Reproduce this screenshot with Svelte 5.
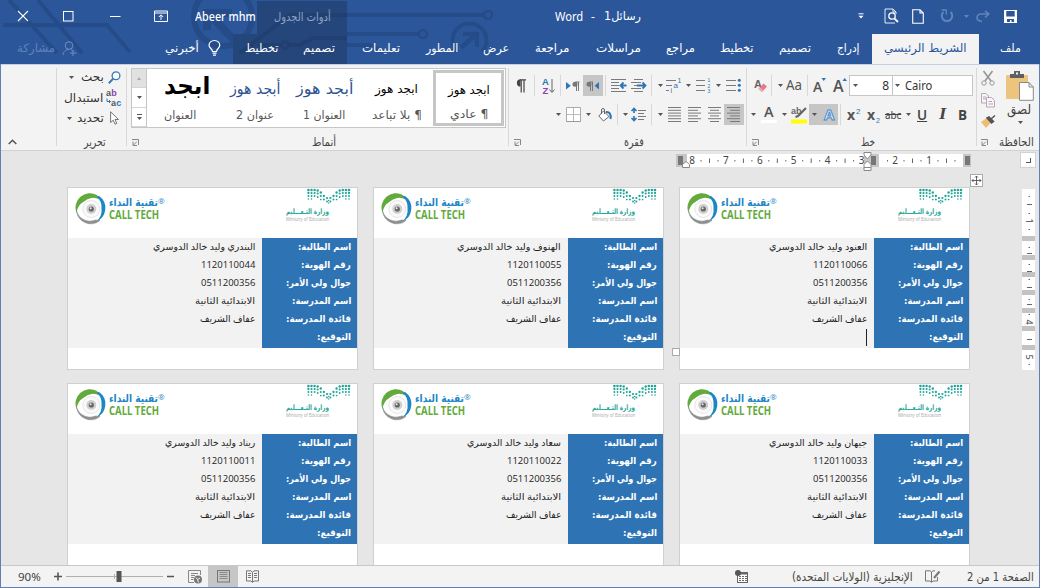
<script>
  function fit(node, w) {
    const apply = (width) => {
      node.style.transform = 'none';
      const n = node.offsetWidth;
      if (n && width) node.style.transform = `scaleX(${width / n})`;
    };
    apply(w);
    return { update: apply };
  }

  const lines = (rows, c = '#7a7a7a') =>
    rows.map(([x1, x2, y]) => `<path d="M${x1} ${y}H${x2}" stroke="${c}"/>`).join('');

  const icons = {
    close: [12, 12, '<path d="M1 1L11 11M11 1L1 11" stroke="#fff" stroke-width="1.1"/>'],
    max: [11, 11, '<rect x=".5" y=".5" width="9.5" height="9.5" stroke="#fff" fill="none"/>'],
    min: [11, 3, '<path d="M0 1.5H10.500" stroke="#fff"/>'],
    ribbonopt: [14, 12, '<path d="M.5 1H13.500V11.500H.5ZM.5 3H13.500M7 10V5M4.800 7L7 4.800L9.200 7" stroke="#fff" fill="none"/>'],
    custom: [6, 6, '<path d="M.5 .8H5.500" stroke="#fff"/><path d="M.5 2.800H5.500L3 5.500Z" fill="#fff"/>'],
    preview: [15, 16, '<path d="M9 1H1V15H11M9 1L12 4V6M9 1V4H12" stroke="#e4ebf5" fill="none"/><circle cx="8" cy="8" r="3.200" stroke="#fff" stroke-width="1.300" fill="#2b579a"/><path d="M10.300 10.300L14 14" stroke="#fff" stroke-width="1.800"/>'],
    newdoc: [12, 15, '<path d="M.7 .7H8L11.300 4V14.300H.7ZM8 .7V4H11.300" stroke="#fff" stroke-width="1.100" fill="none"/>'],
    redo: [14, 14, '<path d="M3.500 3A5.200 5.200 0 1 0 10.500 3" stroke="#6184bb" stroke-width="2" fill="none"/><path d="M6 1H10.800V5.500" transform="translate(-4.500 0)" stroke="#6184bb" stroke-width="1.300" fill="none"/>'],
    undo: [14, 13, '<path d="M6 11.500C-1 11 0 4 5 4H12M9 .8L12.800 4L9 7.500" stroke="#6184bb" stroke-width="1.600" fill="none"/>'],
    dcaret: [5, 3, '<path d="M0 0H5L2.500 3Z" fill="#6184bb"/>'],
    save: [13, 13, '<path d="M0 0H13V13H0Z" fill="#fff"/><path d="M2.300 1H10.700V6.500H2.300ZM3 9H10V12H7.500V10H6V12H3Z" fill="#2b579a"/>'],
    share: [15, 15, '<circle cx="7" cy="4.500" r="3.800" stroke="#6f8fc2" fill="none"/><path d="M1 14C1.500 10 4 8.500 7 8.500M9 8.500C10 9 11 9.500 11.500 10M11 9V15M8 12H14.500" stroke="#6f8fc2" fill="none"/>'],
    bulb: [13, 16, '<path d="M4.500 11.500C4.500 9 1 8 1 5.300A5.300 4.700 0 0 1 11.800 5.300C11.800 8 8.500 9 8.500 11.500ZM4.500 13.200H8.500M5 15.200H8" stroke="#fff" stroke-width="1.200" fill="none"/>'],
    caret: [5, 3, '<path d="M0 0H5L2.500 3Z" fill="#555"/>'],
    launch: [7, 7, '<path d="M0 .5H6.500V6" stroke="#888" fill="none"/><path d="M1 2.500V6.500H5M4.800 2.700L1.500 6" stroke="#888" fill="none"/>'],
    chev: [9, 6, '<path d="M.7 5L4.500 1.200L8.300 5" stroke="#555" stroke-width="1.500" fill="none"/>'],
    find: [13, 13, '<circle cx="8" cy="4.800" r="3.900" stroke="#3a78b9" stroke-width="1.300" fill="#fafdff"/><path d="M5.200 7.600L.8 12.200" stroke="#3a78b9" stroke-width="2"/>'],
    cursor: [9, 14, '<path d="M.6 .8V11.500L3.200 9.200L5 13.200L6.800 12.400L5 8.500H8.500Z" fill="#fff" stroke="#666" stroke-width=".9"/>'],
    pil: [12, 14, '<path d="M5 .8H11M6.200 1V13.500M9 1V13.500" stroke="#444" stroke-width="1.200" fill="none"/><path d="M5.500 .3V7.500A3.600 3.600 0 0 1 5.500 .3" fill="#444"/>'],
    ltr: [14, 10, '<path d="M0 1L4.800 4.700L0 8.500Z" fill="#2f75b5"/><path d="M9.500 1H13.500M10.500 1V10M12.500 1V10" stroke="#777"/><circle cx="9" cy="3.300" r="2.500" fill="#777"/>'],
    rtl: [14, 10, '<path d="M13 1L8.600 4.700L13 8.500Z" fill="#2f75b5"/><path d="M3.500 1H7M4.500 1V10M6.500 1V10" stroke="#777"/><circle cx="3" cy="3.300" r="2.500" fill="#777"/>'],
    outdent: [16, 14, lines([[0, 15, .5], [0, 8, 3.5], [0, 8, 6.5], [0, 8, 9.5], [0, 15, 12.5]]) + '<path d="M15.500 6.500H10M12.500 3.500L9.500 6.500L12.500 9.500" stroke="#2f75b5" stroke-width="1.800" fill="none"/>'],
    indent: [16, 14, lines([[3, 12, .5], [0, 10, 3.5], [3, 8, 6.5], [0, 10, 9.5], [3, 12, 12.5]]) + '<path d="M6 6.500H14M11.500 3.500L14.500 6.500L11.500 9.500" stroke="#2f75b5" stroke-width="1.800" fill="none"/>'],
    multi: [15, 15, lines([[0, 10, 2.5], [0, 6, 7.5], [0, 3, 12.5]]) + '<g fill="#2f75b5" font-family="Liberation Sans" font-size="7"><text x="11.500" y="5">1</text><text x="7.500" y="10" font-size="8">a</text><text x="4.500" y="15">i</text></g>'],
    number: [15, 15, lines([[0, 9, 2.5], [0, 9, 7.5], [0, 9, 12.5]]) + '<g fill="#2f75b5" font-family="Liberation Sans" font-size="5"><text x="11.500" y="4.300">1</text><text x="11.500" y="9.500">2</text><text x="11.500" y="14.700">3</text></g>'],
    bullet: [15, 15, lines([[0, 10, 2.5], [0, 10, 7.5], [0, 10, 12.5]]) + '<g fill="#2f75b5"><circle cx="13.300" cy="2.300" r="1.500"/><circle cx="13.300" cy="7.300" r="1.500"/><circle cx="13.300" cy="12.300" r="1.500"/></g>'],
    borders: [15, 15, '<path d="M.5 .5H14.500V14.500H.5Z" stroke="#aaa" fill="#fff"/><path d="M7.500 1V14M1 7.500H14" stroke="#bbb"/><path d="M.5 14.500H14.500" stroke="#999"/>'],
    bucket: [14, 14, '<path d="M5.500 3L11 8.500L5.500 13L.8 8Z" stroke="#666" fill="#fff"/><path d="M3.500 6V2A1.500 1.500 0 0 1 6.500 2V6" stroke="#666" fill="none"/><path d="M8 4C11 3.500 13.500 6 12.500 11" stroke="#2f75b5" stroke-width="2" fill="none"/>'],
    spacing: [15, 15, lines([[7, 15, 3.5], [7, 13, 6.5], [7, 15, 9.5], [7, 13, 12.5]]) + '<path d="M3 1.500V6M3 9V13.500M.5 4L3 1.500L5.500 4M.5 11L3 13.500L5.500 11" stroke="#2f75b5" stroke-width="1.600" fill="none"/>'],
    just: [14, 15, lines([0, 1, 2, 3, 4, 5].map((i) => [0, 13, i * 2.8 + .5]))],
    left: [14, 15, lines([0, 1, 2, 3, 4, 5].map((i) => [0, i % 2 ? 10 : 13, i * 2.8 + .5]))],
    center: [14, 15, lines([0, 1, 2, 3, 4, 5].map((i) => [i % 2 ? 2 : 0, i % 2 ? 11 : 13, i * 2.8 + .5]))],
    right: [14, 15, lines([0, 1, 2, 3, 4, 5].map((i) => [i % 2 ? 3 : 0, 13, i * 2.8 + .5]))],
    az: [13, 18, '<g font-family="Liberation Sans" font-weight="bold" font-size="9.500"><text x="0" y="8" fill="#2f75b5">A</text><text x=".5" y="17" fill="#8848a8">Z</text></g><path d="M10 2V15M7.500 12.500L10 15.500L12.500 12.500" stroke="#666" fill="none"/>'],
    eraser: [14, 15, '<text x="0" y="10" font-family="Liberation Sans" font-size="11" font-weight="bold" fill="#666">A</text><path d="M4.500 11L9.500 5.500L13 8.500L8 14Z" fill="#e8788a"/><path d="M4.500 11L6 9.500L9.500 12.500L8 14Z" fill="#f3a9b3"/>'],
    shrink: [14, 16, '<text x="0" y="13.500" font-family="Open Sans" font-size="14" font-weight="600" fill="#555">A</text><path d="M8.500 0H13L10.700 3Z" fill="#2f75b5"/>'],
    grow: [15, 16, '<text x="0" y="13.500" font-family="Open Sans" font-size="16" font-weight="600" fill="#555">A</text><path d="M9.500 3H14L11.700 0Z" fill="#2f75b5"/>'],
    fcolor: [16, 18, '<text x="3" y="10.500" font-family="Open Sans" font-size="14.500" font-weight="600" fill="#555">A</text><rect x="0" y="14" width="16" height="3" fill="#fff"/>'],
    hilite: [16, 18, '<text x="0" y="8" font-family="Liberation Sans" font-size="9" font-weight="bold" fill="#666">ab</text><path d="M15 2L7 10L4.500 11" stroke="#666" stroke-width="2.200" fill="none"/><rect x="0" y="13.500" width="16" height="4" fill="#ff0"/>'],
    effects: [13, 15, '<text x="1" y="13" font-family="Open Sans" font-size="15" font-weight="bold" fill="#e7f1fb" stroke="#4a8ccc">A</text>'],
    sup: [15, 16, '<text x="0" y="13" font-family="Open Sans" font-size="14" font-weight="bold" fill="#555">x</text><text x="9" y="6.500" font-family="Liberation Sans" font-size="8" fill="#2f75b5">2</text>'],
    sub: [15, 16, '<text x="0" y="13" font-family="Open Sans" font-size="14" font-weight="bold" fill="#555">x</text><text x="9" y="16" font-family="Liberation Sans" font-size="7" fill="#2f75b5">2</text>'],
    cut: [14, 15, '<path d="M2.500 0L10 10M11.500 0L4 10" stroke="#999" stroke-width="1.700"/><circle cx="3" cy="12" r="2.200" fill="none" stroke="#999"/><circle cx="11" cy="12" r="2.200" fill="none" stroke="#999"/>'],
    copy: [14, 15, '<path d="M.5 .5H5L7.500 3V10H.5Z" fill="#f8f4f8" stroke="#b5a9b5"/><path d="M5.500 4.500H10.500L13.500 7.500V14H5.500Z" fill="#f8f4f8" stroke="#b5a9b5"/><path d="M2 4H5M2 6H5M7.500 8.500H11M7.500 11H12" stroke="#b5a9b5"/>'],
    brush: [15, 13, '<path d="M0 7L7 2L9.500 8L5 13Z" fill="#edbd76"/><path d="M6 3L10.500 8L12.500 6.500L8 2ZM10 4L14 .5" fill="#555" stroke="#555" stroke-width="1.500"/>'],
    paste: [28, 30, '<rect x="0" y="4" width="22" height="24" rx="1" fill="#ecc47d"/><path d="M4 3H8V0H14V3H18V7H4Z" fill="#5f5f5f"/><rect x="10" y="1.500" width="2" height="2" fill="#f3f3f3"/><path d="M13.500 11.500H23L27.300 16V29.300H13.500ZM23 11.500V16H27.300" fill="#fff" stroke="#8a8a8a"/>'],
    web: [14, 14, '<path d="M12.500 5V.5H.5V12.500H6M3 3.500H10M3 5.500H7M3 7.500H6M3 9.500H5.500" stroke="#888" fill="none"/><circle cx="10" cy="9.500" r="4" fill="#777"/><path d="M8 7.500L9.500 9.500L12 8M9.500 9.500L10.500 12.500" stroke="#f3f3f3" fill="none"/>'],
    print: [13, 13, '<rect x=".5" y=".5" width="12" height="11.500" fill="none" stroke="#777"/>' + lines([[2.5, 10.5, 2.5], [2.5, 10.5, 4.5], [2.5, 10.5, 6.5], [2.5, 10.5, 8.5]], '#8a8a8a')],
    book: [14, 13, '<path d="M6.500 2.500L5 .8H.5V11H5L6.500 12.500L8 11H12.500V.8H8ZM6.500 2.500V12M2 3.500H5M2 5.500H5M2 7.500H5M8 3.500H11M8 5.500H11M8 7.500H11" stroke="#777" fill="none"/>'],
    macro: [14, 13, '<rect x="2.500" y="2.500" width="10" height="10" fill="#fff" stroke="#666"/><path d="M4 6.500H12M4 8.500H12M4 10.500H12" stroke="#666" stroke-dasharray="2 1"/><rect x="5" y="2" width="8" height="2.500" fill="#666"/><circle cx="3" cy="3" r="3" fill="#555"/>'],
    proof: [16, 13, '<path d="M6.500 2L5 .8H.5V11H5L6.500 12.300L8 11H12.500V7M6.500 2V12M6.500 2L8 .8H10" stroke="#777" fill="none"/><path d="M9 8L14.500 1.500" stroke="#777" stroke-width="2"/>'],
    move: [13, 13, '<rect x=".5" y=".5" width="12" height="12" fill="#fff" stroke="#aaa"/><path d="M6.500 2V11M2 6.500H11M5 3.500L6.500 2L8 3.500M5 9.500L6.500 11L8 9.500M3.500 5L2 6.500L3.500 8M9.500 5L11 6.500L9.500 8" stroke="#555" fill="none" stroke-width=".9"/>'],
    replace: [16, 16, '<g font-family="Liberation Sans" font-size="9" font-weight="600"><text x="0" y="5.500" fill="#555">a</text><text x="5.300" y="5.500" fill="#8848a8">b</text><text x="5" y="15.500" fill="#555">a</text><text x="10.300" y="15.500" fill="#2f75b5">c</text></g><path d="M1 8.500V11.500H4.500M3 10L4.500 11.500L3 13" stroke="#2f75b5" fill="none"/>']
  };

  const I = (g, n, box = 0) => ({ k: 'i', g, n, box });
  const C = (g) => ({ k: 'i', g, n: 'caret', box: 0 });
  const S = (g) => ({ k: 's', g });
  const T = (g, t, w, c = '') => ({ k: 't', g, t, w, c });

  const title = [
    I(17, 'close'), I(34, 'max'), I(36, 'min'), I(33, 'ribbonopt'), T(27, 'Abeer mhm', 61, 'name'),
    T(18, 'أدوات الجدول', 57, 'dim'), T(224, 'Word', 28, 'lat'), T(8, '-', 4, 'lat'), T(9, 'رسائل1', 37),
    I(217, 'custom'), I(20, 'preview'), I(13, 'newdoc'), I(16, 'redo'), I(10, 'dcaret'), I(7, 'undo'), I(14, 'save')
  ];
  const tabs = [
    T(17, 'مشاركة', 38, 'faint'), I(7, 'share'), T(88, 'أخبرني', 34), I(9, 'bulb'),
    T(24, 'تخطيط', 33), T(25, 'تصميم', 32), T(27, 'تعليمات', 38), T(26, 'المطور', 32), T(25, 'عرض', 26),
    T(26, 'مراجعة', 35), T(26, 'مراسلات', 45), T(25, 'مراجع', 29), T(25, 'تخطيط', 33), T(26, 'تصميم', 32),
    T(26, 'إدراج', 23), T(24, 'الشريط الرئيسي', 83, 'on'), T(33, 'ملف', 21)
  ];
  const para1 = [
    I(6, 'pil'), S(7), I(7, 'az'), S(5), I(5, 'ltr'), I(3, 'rtl', 20), S(2), I(5, 'outdent'), I(4, 'indent'), S(4),
    C(6), I(3, 'multi'), C(5), I(5, 'number'), C(5), I(5, 'bullet')
  ];
  const para2 = [
    C(47), I(5, 'borders'), C(5), I(7, 'bucket'), S(5), C(5), I(3, 'spacing'), S(5), C(6), I(5, 'just'), I(6, 'left'),
    I(6, 'center'), I(2, 'right', 20)
  ];
  const font1 = [I(7, 'eraser'), S(3), C(6), T(3, 'Aa', 16, 'aa'), S(5), I(5, 'shrink'), I(6, 'grow')];
  const font2 = [
    C(4), I(5, 'fcolor'), C(5), I(4, 'hilite'), { k: 'fx', g: 2 }, S(2), I(6, 'sup'), I(5, 'sub'),
    T(3, 'abc', 16, 'strike'), C(5), T(6, 'U', 10, 'u'), T(12, 'I', 7, 'ital'), T(12, 'B', 9, 'b')
  ];
  const styles = [
    { p: 'ابجد', pw: 46, l: 'العنوان', lw: 32, w: 75, c: 'big' },
    { p: 'أبجد هوز', pw: 50, l: 'عنوان 2', lw: 38, w: 66, c: 'h2' },
    { p: 'أبجد هوز', pw: 57, l: 'العنوان 1', lw: 42, w: 72, c: 'h1' },
    { p: 'ابجد هوز', pw: 43, l: '¶ بلا تباعد', lw: 50, w: 73, c: '' },
    { p: 'ابجد هوز', pw: 42, l: '¶ عادي', lw: 38, w: 71, c: 'sel' }
  ];
  const status = [
    T(18, '90%', 23, 'slat'), { k: 'zoom', g: 13 }, I(13, 'web'), I(6, 'print', 30), I(8, 'book'),
    I(475, 'macro'), T(43, 'الإنجليزية (الولايات المتحدة)', 121), I(12, 'proof'), T(26, 'الصفحة 1 من 2', 67)
  ];

  const fields = [
    ['اسم الطالبة:', 53], ['رقم الهوية:', 50], ['جوال ولي الأمر:', 65],
    ['اسم المدرسة:', 59], ['قائدة المدرسة:', 65], ['التوقيع:', 34]
  ];
  const cards = [
    ['البندري وليد خالد الدوسري', 102, '1120110044'],
    ['الهنوف وليد خالد الدوسري', 104, '1120110055'],
    ['العنود وليد خالد الدوسري', 98, '1120110066'],
    ['ريناد وليد خالد الدوسري', 90, '1120110011'],
    ['سعاد وليد خالد الدوسري', 94, '1120110022'],
    ['جيهان وليد خالد الدوسري', 98, '1120110033']
  ].map(([n, w, id], i) => ({
    active: i === 2,
    values: [[n, w], [id, 54], ['0511200356', 54], ['الابتدائية الثانية', 60], ['عفاف الشريف', 55]]
  }));

  const half = [[2, 5, 8, 11], [2, 5, 8, 11], [2, 5, 8], [2.5, 5.5, 9], [4.5, 8, 11.5], [8, 11.5], [10, 13.5]];
  const dots = [[21.7, 12.5, 0.8], [21.7, 15, 0.7]];
  half.forEach((col, i) =>
    col.forEach((y, j) => {
      const r = 1.3 - j * 0.16 - i * 0.03;
      dots.push([1.4 + i * 3.1, y, r], [42 - i * 3.1, y, r]);
    })
  );
  const hnums = [8, 7, 6, 5, 4, 3].map((n, i) => [n, 16 + i * 33.9]).concat([[2, 219], [1, 253]]);
  const hticks = [];
  hnums.forEach(([n, x]) => {
    if (n !== 3) hticks.push([x + 8.5, 0], [x + 17, 1], [x + 25.5, 0]);
    if (n === 2) hticks.push([x - 8, 0]);
  });
</script>

{#snippet icon(n)}
  <svg class="ic" width={icons[n][0]} height={icons[n][1]} fill="#444">{@html icons[n][2]}</svg>
{/snippet}

{#snippet txt(t, w, c = '')}
  <span class="t {c}" style:width="{w}px"><span use:fit={w} dir={/[\u0600-\u06ff]/.test(t) ? 'rtl' : 'ltr'}>{t}</span></span>
{/snippet}

{#snippet row(items)}
  {#each items as it}
    <span class="it" style:margin-left="{it.g}px">
      {#if it.k === 'i'}
        {#if it.box}<span class="hot" style:width="{it.box}px">{@render icon(it.n)}</span>{:else}{@render icon(it.n)}{/if}
      {:else if it.k === 't'}
        {@render txt(it.t, it.w, it.c)}
      {:else if it.k === 's'}
        <span class="vs"></span>
      {:else if it.k === 'fx'}
        <span class="hot fx">{@render icon('caret')}{@render icon('effects')}</span>
      {:else}
        <svg class="ic" width="121" height="14">
          <path d="M0 6.500H8M4 2.500V10.500M113 6.500H120" stroke="#555" stroke-width="1.600" />
          <path d="M12 6.500H109M60.500 4V9" stroke="#b0b0b0" />
          <rect x="62.500" y="1" width="5" height="11" fill="#555" />
        </svg>
      {/if}
    </span>
  {/each}
{/snippet}

{#snippet label(t, w, launch = true)}
  <div class="lab">{#if launch}{@render icon('launch')}{/if}<span class="mid">{@render txt(t, w)}</span></div>
{/snippet}

<div class="app">
  <header>
    <svg class="deco" width="1040" height="64" fill="none" stroke="#254c88" stroke-width="4">
      <path d="M9 0L57 53M38 0L82 53M3 25H107L130 52" />
      <circle cx="223" cy="17" r="29" stroke-width="6" />
      <path d="M236 42L209 14M207 30V13H232" stroke-width="8" />
      <rect x="257" y="1" width="90" height="63" fill="#25467b" stroke="none" />
      <rect x="233" y="34" width="24" height="30" fill="#25467b" stroke="none" />
      <g stroke="#213f70">
        <path d="M258 45H281M289 45H300L313 38H347M240 53L290 15H347" />
        <circle cx="285" cy="45" r="3.500" stroke-width="2.500" />
      </g>
      <path d="M347 15H483M347 34H419M347 45H370L383 52" />
      <circle cx="488" cy="15" r="4" stroke-width="2.500" />
      <circle cx="423" cy="34" r="4" stroke-width="2.500" />
      <path d="M457 52A17 17 0 1 1 482 52" stroke-width="4" />
      <path d="M461 48L476 34M463 34H477V47" stroke-width="4.500" />
    </svg>
    <div class="title">{@render row(title)}</div>
    <nav>{@render row(tabs)}</nav>
  </header>

  <section class="ribbon">
    <div class="g ga">{@render icon('chev')}</div>
    <div class="g gb">
      <div class="er">{@render row([C(12), T(7, 'بحث', 23), I(4, 'find')])}</div>
      <div class="er">{@render row([T(7, 'استبدال', 39), I(3, 'replace')])}</div>
      <div class="er">{@render row([C(10), T(5, 'تحديد', 27), I(6, 'cursor')])}</div>
      {@render label('تحرير', 22, false)}
    </div>
    <div class="g gc">
      <div class="gallery">
        <div class="scroll">
          <span class="off"><i class="up"></i></span><span>{@render icon('caret')}</span><span><i class="bar"></i>{@render icon('caret')}</span>
        </div>
        {#each styles as s}
          <div class="st {s.c}" style:width="{s.w}px">
            <div class="pv">{@render txt(s.p, s.pw)}</div>
            <div class="nm">{@render txt(s.l, s.lw)}</div>
          </div>
        {/each}
      </div>
      {@render label('أنماط', 24)}
    </div>
    <div class="g gd">
      <div class="rr">{@render row(para1)}</div>
      <div class="rr">{@render row(para2)}</div>
      {@render label('فقرة', 20)}
    </div>
    <div class="g ge">
      <div class="rr">
        {@render row(font1)}
        <div class="combo size">{@render icon('caret')}<span class="cv">8</span></div>
        <div class="combo face">{@render icon('caret')}{@render txt('Cairo', 27)}</div>
      </div>
      <div class="rr">{@render row(font2)}</div>
      {@render label('خط', 14)}
    </div>
    <div class="g gf">
      <div class="clip">
        <div class="small">{@render icon('cut')}{@render icon('copy')}{@render icon('brush')}</div>
        <div class="paste">{@render icon('paste')}{@render txt('لصق', 24, 'pl')}{@render icon('caret')}</div>
      </div>
      {@render label('الحافظة', 35)}
    </div>
  </section>

  <main>
    <div class="rulers">
      <svg class="hr" width="296" height="20">
        <rect x="7" y="3" width="284" height="13" fill="#fff" />
        <rect x="0" y="3" width="11" height="13" fill="#c6c6c6" />
        <rect x="2" y="5" width="5" height="9" fill="#777" />
        <rect x="188" y="3" width="15" height="13" fill="#c6c6c6" />
        <rect x="195" y="5" width="5" height="9" fill="#777" />
        <rect x="287" y="3" width="8" height="13" fill="#c6c6c6" />
        <rect x="289" y="5" width="5" height="9" fill="#777" />
        {#each hnums as [n, x]}<text {x} y="13" text-anchor="middle">{n}</text>{/each}
        {#each hticks as [x, big]}
          {#if x < 285}<rect {x} y={big ? 7.5 : 9} width="1" height={big ? 4.500 : 1.500} fill="#666" />{/if}
        {/each}
        <g fill="#fff" stroke="#888">
          <path d="M6.500 16.500V13.500L10 10.500L13.500 13.500V16.500Z" />
          <path d="M188 1.500H195V4L191.500 8L188 4ZM191.500 10L195 13.500V16.500H188V13.500Z" />
          <path d="M188 16.500H195V19.500H188Z" />
        </g>
      </svg>
      <div class="corner"><i></i></div>
    </div>
    <div class="work">
      <div class="cards">
        {#each cards as card}
          <article>
            <div class="head">
              <svg class="swirl" width="32" height="33" fill="none">
                <path d="M1.500 21A14.500 14.500 0 0 1 22 3L24.500 7.500A13 13 0 0 0 9 9.500A15 15 0 0 0 1.500 21Z" fill="#62aa3b" />
                <path d="M24 4A14.700 14.700 0 0 1 20.500 30A15 15 0 0 0 26.500 16A14 14 0 0 0 21.500 4.500Z" fill="#1d86c4" />
                <path d="M1.500 19A14.500 14.500 0 0 0 25 28.500L20.500 28A14 14 0 0 1 1.500 19Z" fill="#8d9092" stroke="#8d9092" stroke-width=".6" />
                <circle cx="16.300" cy="17" r="8.500" fill="#fafafa" stroke="#e6e6e6" />
                <circle cx="16.300" cy="17" r="5" fill="#cfcfcf" />
                <circle cx="16.300" cy="17" r="2.600" fill="#666" />
                <circle cx="15.600" cy="16.300" r="1" fill="#eee" />
              </svg>
              <div class="brand">
                <div class="ar">{@render txt('تقنية النداء', 49)}<sup>®</sup></div>
                <div class="en">{@render txt('CALL TECH', 50)}</div>
              </div>
              <div class="min">
                <svg width="44" height="16" fill="#1fa597">{#each dots as [cx, cy, r]}<circle {cx} {cy} {r} />{/each}</svg>
                <div class="m1">{@render txt('وزارة التـعـــليم', 43)}</div>
                <div class="m2">{@render txt('Ministry of Education', 43)}</div>
              </div>
            </div>
            <div class="table">
              <div class="vals">
                {#each card.values as [v, w]}<div class="cell">{@render txt(v, w)}</div>{/each}
                {#if card.active}<div class="cell"><i class="beam"></i></div>{/if}
              </div>
              <div class="keys">
                {#each fields as [v, w]}<div class="cell">{@render txt(v, w)}</div>{/each}
              </div>
            </div>
            {#if card.active}
              <span class="mv">{@render icon('move')}</span><span class="rs"></span>
            {/if}
          </article>
        {/each}
      </div>
      <svg class="vr" width="13" height="181">
        <rect width="13" height="181" fill="#fff" />
        {#each [47, 66, 83, 101, 119, 137, 156] as y}<rect x="0" {y} width="13" height="5" fill="#c3c3c3" />{/each}
        {#each [7, 24, 40, 58, 75, 90, 110, 125, 175] as y}<rect x="6.500" {y} width="1.500" height="1" fill="#666" />{/each}
        {#each [15, 64, 82, 98, 115, 150] as y}<rect x="5" {y} width="5" height="1" fill="#666" />{/each}
        {#each [[1, 32], [4, 133], [5, 168]] as [n, y]}<text transform="translate(3.500 {y}) rotate(90)" text-anchor="middle">{n}</text>{/each}
      </svg>
    </div>
  </main>

  <footer>{@render row(status)}</footer>
</div>

<style>
  :global(body) { margin: 0; overflow: hidden; }
  .app { width: 1040px; height: 588px; box-sizing: border-box; display: flex; flex-direction: column; background: #e6e6e6; font: 11.500px 'DejaVu Sans', sans-serif; color: #444; overflow: hidden; position: relative; direction: ltr; }
  .app::after { content: ''; position: absolute; inset: 64px 0 0 0; border: 1px solid #5f7fb6; border-top: 0; pointer-events: none; }
  .ic { display: block; flex: none; overflow: visible; }
  .t { display: inline-flex; flex: none; justify-content: flex-start; white-space: nowrap; line-height: 16px; }
  .t > span { display: inline-block; flex: none; transform-origin: 0 50%; }
  .it { display: flex; flex: none; align-items: center; }
  header { height: 64px; background: #2b579a; color: #fff; position: relative; flex: none; }
  .deco { position: absolute; left: 0; top: 0; }
  .title, nav { position: relative; display: flex; align-items: center; }
  .title { height: 32px; box-sizing: border-box; }
  nav { height: 32px; }
  nav .t { line-height: 32px; }
  .lat, .name { font: 12px 'Noto Sans', sans-serif; }
  .name { font-weight: 500; }
  .dim { color: #8fa3c4; padding-top: 2px; }
  .faint { color: #5f82ba; }
  .on { background: #f3f3f3; color: #2b579a; padding: 0 12px; margin: 2px -12px 0 -12px; height: 30px; }
  nav .on { line-height: 29px; }

  .ribbon { height: 87px; flex: none; display: flex; background: #f3f3f3; border-top: 1px solid #c5cfe6; border-bottom: 1px solid #d2d2d2; box-sizing: border-box; }
  .g { box-sizing: border-box; display: flex; flex-direction: column; position: relative; height: 85px; flex: none; padding-top: 6px; }
  .g:not(.gf)::after { content: ''; position: absolute; right: 0; top: 3px; height: 78px; width: 1px; background: #d8d8d8; }
  .ga { width: 57px; justify-content: flex-end; padding: 0 0 5px 8px; }
  .gb { width: 70px; }
  .gc { width: 382px; padding: 3px 0 0 4px; }
  .gd { width: 238px; }
  .ge { width: 230px; }
  .gf { width: 63px; }
  .er { height: 20.500px; display: flex; align-items: center; margin-top: -4px; margin-bottom: 4px; color: #333; }
  .er .t { line-height: 18px; }
  .rr { height: 29px; display: flex; align-items: center; }
  .lab { margin-top: auto; height: 16px; display: flex; align-items: center; padding-left: 5px; }
  .gc .lab { padding-left: 1px; }
  .gf .lab { padding-left: 4px; }
  .mid { flex: 1; display: flex; justify-content: center; }
  .gf .mid { justify-content: flex-end; padding-right: 6px; }
  .vs { width: 1px; height: 21px; background: #d8d8d8; }
  .hot { background: #c6c6c6; display: flex; align-items: center; justify-content: center; height: 21px; }
  .fx { width: 29px; gap: 6px; }
  .aa { font: 15px/19px 'Noto Sans', sans-serif; color: #555; padding-bottom: 2px; }
  .strike { font: 11px 'Noto Sans', sans-serif; text-decoration: line-through; }
  .u, .b { font: bold 15px/18px 'Open Sans', sans-serif; padding-bottom: 2px; }
  .u { text-decoration: underline; font-weight: 600; }
  .ital { font: italic bold 16px/18px 'Liberation Serif', serif; padding-bottom: 1px; }
  .combo { height: 19px; background: #fff; border: 1px solid #c6c6c6; display: flex; align-items: center; box-sizing: content-box; font: 12px 'Noto Sans', sans-serif; color: #333; }
  .size { width: 42px; margin-left: 1px; justify-content: space-between; }
  .size .ic { margin: 0 6px 0 3px; }
  .face .ic { margin: 0 5px 0 2px; }
  .face { width: 79px; border-left: 0; }
  .cv { margin-right: 3px; }
  .gallery { display: flex; height: 60px; width: 375px; box-sizing: border-box; border: 1px solid #c6c6c6; background: #fff; }
  .scroll { width: 14px; border-right: 1px solid #c6c6c6; display: flex; flex-direction: column; flex: none; }
  .scroll span { flex: 1; display: flex; flex-direction: column; gap: 2px; align-items: center; justify-content: center; border-bottom: 1px solid #d5d5d5; }
  .scroll .off { background: #e1e1e1; }
  .up { border: 2.500px solid transparent; border-top: 0; border-bottom: 3px solid #aaa; }
  .bar { width: 5px; height: 1px; background: #555; }
  .st { box-sizing: border-box; height: 56px; margin-top: 1px; display: flex; flex-direction: column; align-items: center; flex: none; }
  .st:nth-child(2) .nm { padding-right: 9px; }
  .pv { height: 37px; display: flex; align-items: center; color: #000; font-size: 12px; }
  .nm { height: 16px; display: flex; align-items: center; color: #555; }
  .big .pv { font-size: 24px; padding: 0 0 5px 4px; height: 32px; font-weight: bold; }
  .h1 .pv, .h2 .pv { color: #2f5496; font-size: 15.500px; }
  .sel { border: 3px solid #c6c6c6; }
  .sel .pv { height: 33px; }
  .clip { display: flex; }
  .small { width: 18px; margin-left: 4px; display: flex; flex-direction: column; gap: 7px; }
  .paste { display: flex; flex-direction: column; align-items: center; width: 34px; margin-left: 4px; }
  .pl { font-size: 13px; margin: 1px 0 3px -2px; }

  main { height: 414px; flex: none; display: flex; flex-direction: column; overflow: hidden; }
  .rulers { height: 36px; display: flex; align-items: flex-start; padding-left: 676px; flex: none; }
  .hr { flex: none; font: 10px 'Noto Sans', sans-serif; fill: #444; }
  .corner { width: 14px; height: 14px; margin: 1px 0 0 48px; background: #fff; border: 1px solid #d2d2d2; display: flex; align-items: center; justify-content: center; }
  .corner i { width: 4px; height: 4px; border: solid #555; border-width: 0 1.500px 1.500px 0; }
  .work { display: flex; flex: none; align-items: flex-start; }
  .cards { margin-left: 67px; display: grid; grid-template-columns: repeat(3, 291px); column-gap: 15px; row-gap: 12.500px; }
  article { height: 183px; box-sizing: border-box; background: #fff; border: 1px solid #d0d0d0; position: relative; display: flex; flex-direction: column; }
  article:nth-child(n + 4) { height: 190px; }
  .head { height: 50px; display: flex; flex: none; }
  .swirl { margin: 4px 0 0 7px; flex: none; }
  .brand { width: 56px; margin: 8px 0 0 2px; flex: none; }
  .ar { color: #1d86c4; font-size: 10.500px; font-weight: bold; display: flex; height: 12px; }
  .ar .t { line-height: 13px; }
  .ar sup { font: 8px/10px 'Open Sans', sans-serif; }
  .en { color: #62aa3b; font: 700 12px 'Open Sans', sans-serif; height: 12px; margin-top: 1px; }
  .en .t { line-height: 11px; display: flex; }
  .min { width: 65px; margin-left: 121px; display: flex; flex-direction: column; align-items: flex-start; }
  .min svg { align-self: flex-end; flex: none; }
  .m1 { color: #1fa597; font-size: 7.500px; font-weight: bold; height: 12px; }
  .m1 .t { line-height: 15px; }
  .m2 { color: #a5a5a5; font: 5px/7px 'Open Sans', sans-serif; }
  .m2 .t { line-height: 7px; }
  .table { display: flex; height: 110px; flex: none; }
  .vals { flex: 1; background: #f2f2f2; padding-right: 7px; color: #222; font: 9.500px 'Open Sans', 'DejaVu Sans', sans-serif; }
  .keys { width: 95px; box-sizing: border-box; background: #2e74b5; color: #fff; padding-right: 6px; font-weight: bold; font-size: 9.500px; }
  .cell { height: 18px; display: flex; justify-content: flex-end; align-items: center; }
  .cell .t { line-height: 18px; }
  .beam { width: 1px; height: 17px; background: #222; }
  .mv { position: absolute; left: 290px; top: -14px; }
  .rs { position: absolute; left: -8px; top: 160px; width: 6px; height: 6px; background: #fff; border: 1px solid #aaa; }
  .vr { margin-left: 52px; margin-top: 2px; font: 9px 'Noto Sans', sans-serif; fill: #444; }
  footer { height: 23px; flex: none; box-sizing: border-box; background: #f3f3f3; border-top: 1px solid #c8c8c8; display: flex; align-items: center; padding-bottom: 1px; }
  footer .hot { height: 21px; }
  .slat { font: 11.500px/15px 'Noto Sans', sans-serif; padding-bottom: 1px; }
</style>
